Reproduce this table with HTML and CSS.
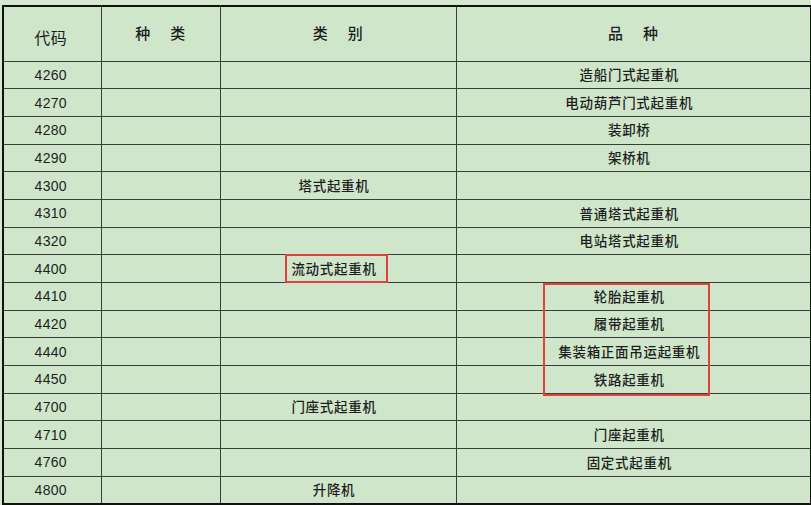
FILE: index.html
```html
<html lang="zh-CN">
  <head>
    <meta charset="UTF-8" />
    <meta name="viewport" content="width=device-width, initial-scale=1.0" />
    <title>起重机分类代码</title>
    <link rel="stylesheet" href="styles.css">
  </head>
  <body>
    <div class="sheet">
      <table class="codes">
        <colgroup>
          <col class="c_code" />
          <col class="c_kind" />
          <col class="c_cat" />
          <col class="c_var" />
        </colgroup>
        <thead>
          <tr>
            <th class="h_code">代码</th>
            <th>种&nbsp;&nbsp;&nbsp;&nbsp;&nbsp;类</th>
            <th>类&nbsp;&nbsp;&nbsp;&nbsp;&nbsp;别</th>
            <th>品&nbsp;&nbsp;&nbsp;&nbsp;&nbsp;种</th>
          </tr>
        </thead>
        <tbody>
          <tr><td>4260</td><td></td><td></td><td>造船门式起重机</td></tr>
          <tr><td>4270</td><td></td><td></td><td>电动葫芦门式起重机</td></tr>
          <tr><td>4280</td><td></td><td></td><td>装卸桥</td></tr>
          <tr><td>4290</td><td></td><td></td><td>架桥机</td></tr>
          <tr><td>4300</td><td></td><td>塔式起重机</td><td></td></tr>
          <tr><td>4310</td><td></td><td></td><td>普通塔式起重机</td></tr>
          <tr><td>4320</td><td></td><td></td><td>电站塔式起重机</td></tr>
          <tr><td>4400</td><td></td><td>流动式起重机</td><td></td></tr>
          <tr><td>4410</td><td></td><td></td><td>轮胎起重机</td></tr>
          <tr><td>4420</td><td></td><td></td><td>履带起重机</td></tr>
          <tr><td>4440</td><td></td><td></td><td>集装箱正面吊运起重机</td></tr>
          <tr><td>4450</td><td></td><td></td><td>铁路起重机</td></tr>
          <tr><td>4700</td><td></td><td>门座式起重机</td><td></td></tr>
          <tr><td>4710</td><td></td><td></td><td>门座起重机</td></tr>
          <tr><td>4760</td><td></td><td></td><td>固定式起重机</td></tr>
          <tr><td>4800</td><td></td><td>升降机</td><td></td></tr>
        </tbody>
      </table>

      <!-- red annotation boxes -->
      <div class="mark mark_cat"></div>
      <div class="mark mark_var"></div>
    </div>
  </body>
</html>
```

FILE: styles.css
```css
body {
  margin: 0;
  background-color: #d3e8cf;
  font-family: "Noto Sans CJK SC", "Liberation Sans", sans-serif;
  color: #1e1e1e;
}

.sheet {
  position: relative;
  width: 811px;
  height: 505px;
  padding: 5px 0 0 2px;
  box-sizing: border-box;
  overflow: hidden;
}

.codes {
  border-collapse: collapse;
  table-layout: fixed;
  width: 808px;
  background-color: #cfe6cb;
  border: 2px solid #111;
}

.c_code { width: 98px; }
.c_kind { width: 119px; }
.c_cat  { width: 236px; }
.c_var  { width: 355px; }

.codes th,
.codes td {
  border: 1px solid #3d3d3d;
  padding: 0;
  text-align: center;
  white-space: nowrap;
  overflow: hidden;
}

.codes th {
  height: 55px;
  font-size: 15px;
  font-weight: 500;
  vertical-align: top;
  padding-top: 15px;
  box-sizing: border-box;
  letter-spacing: 0.5px;
}

.codes th.h_code {
  font-size: 16px;
  font-weight: normal;
  padding-top: 18px;
  padding-right: 3px;
}

.codes td {
  height: 27.7px;
  padding-right: 8px;
  font-size: 13.5px;
  font-weight: 500;
  letter-spacing: 0.7px;
  line-height: 1;
}

.codes td:first-child {
  padding-right: 3px;
  font-family: "Liberation Sans", sans-serif;
  font-size: 14px;
  font-weight: normal;
  letter-spacing: 0.3px;
}

.mark {
  position: absolute;
  border: 2px solid #e2403c;
  box-sizing: border-box;
}

.mark_cat {
  left: 285px;
  top: 254px;
  width: 103px;
  height: 29px;
}

.mark_var {
  left: 543px;
  top: 283px;
  width: 167px;
  height: 113px;
}
```
